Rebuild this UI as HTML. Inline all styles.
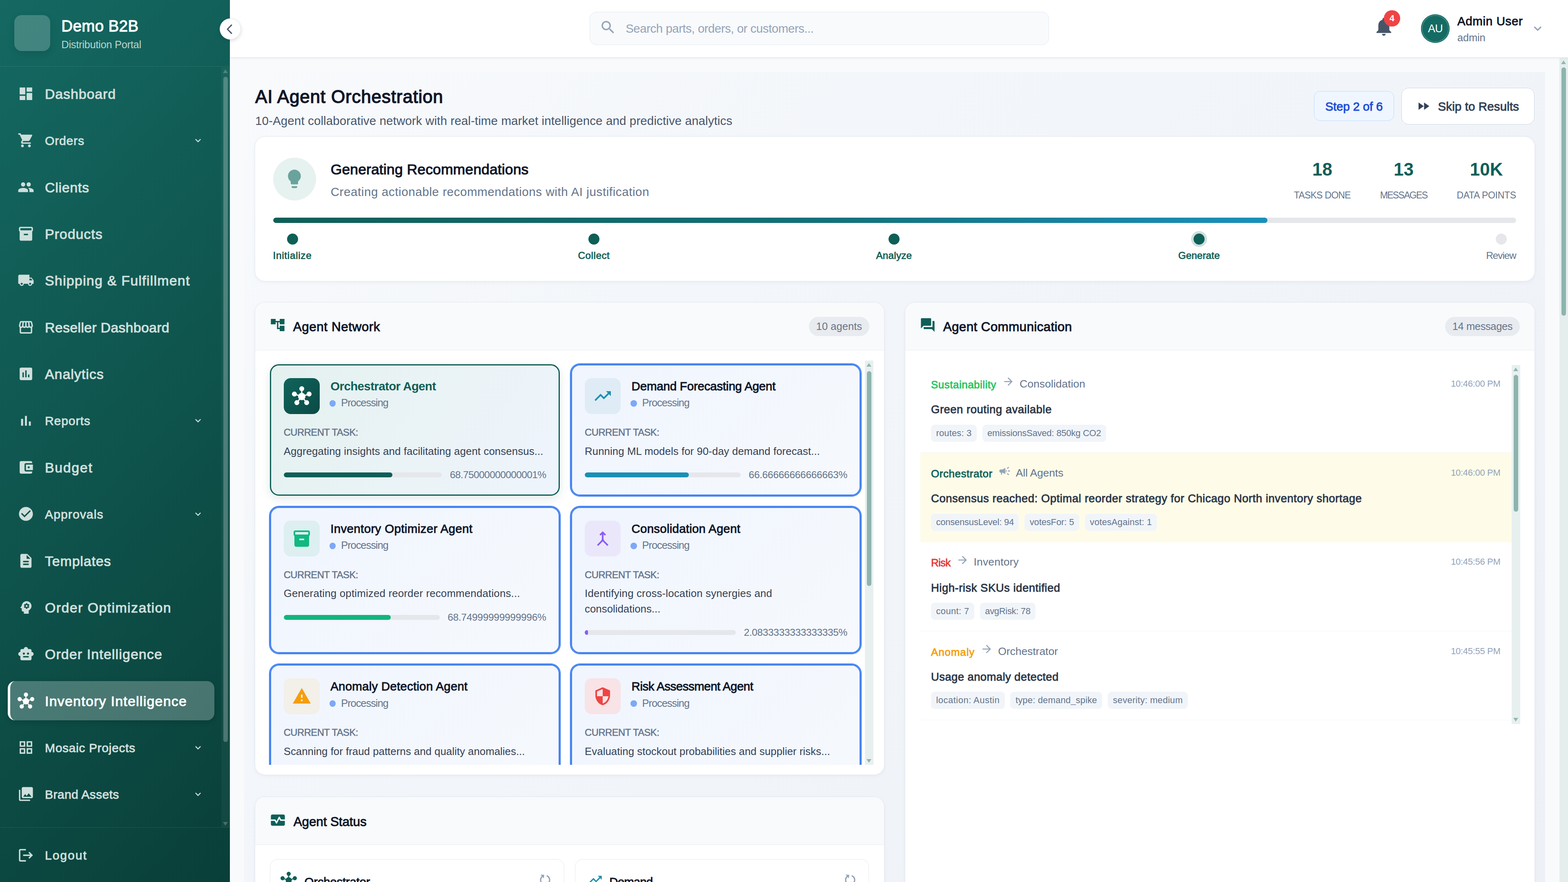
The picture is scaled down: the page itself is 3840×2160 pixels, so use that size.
<!DOCTYPE html>
<html lang="en"><head><meta charset="utf-8"><title>AI Agent Orchestration - Demo B2B Distribution Portal</title>
<meta name="viewport" content="width=3840, initial-scale=1">
<style>
*{box-sizing:border-box;margin:0;padding:0}
html,body{width:3840px;height:2160px;overflow:hidden}
body{position:relative;font-family:"Liberation Sans",sans-serif;background:#f8fafc;color:#0f172a;-webkit-font-smoothing:antialiased}
span{white-space:nowrap}
svg{display:block;flex:none}
i{display:block;font-style:normal}
a{text-decoration:none;cursor:pointer}
button{font:inherit;cursor:pointer}
/* sidebar */
.sb{position:absolute;left:0;top:0;width:562.5px;height:2160px;z-index:3;background:linear-gradient(135deg,#146962 0%,#093f38 100%);color:#fff}
.sbh{position:absolute;left:0;top:0;width:100%;height:162.6px;border-bottom:1.5px solid rgba(255,255,255,.1)}
.logo{position:absolute;left:35px;top:37px;width:88px;height:88px;border-radius:18px;background:rgba(255,255,255,.2);box-shadow:0 6px 18px rgba(0,0,0,.12)}
.b1,.b2{position:absolute;left:150.3px;line-height:1}
.b1{top:45px;font-size:38.5px;font-weight:400;-webkit-text-stroke:.034em;color:#fff}
.b2{top:97.2px;font-size:25.5px;color:rgba(255,255,255,.72)}
.nav{position:absolute;left:0;top:163.5px;width:543.75px;padding:18.25px 0 0 18.75px}
.ni{display:flex;align-items:center;height:95.6px;width:506.25px;margin-bottom:18.78px;border-radius:18px;border-left:6px solid transparent;padding-left:18.65px;color:#cfdfdc}
.nic{margin-right:25.6px}
.nt{font-size:33.8px;font-weight:400;-webkit-text-stroke:.034em;position:relative;top:1px}
.nt.sm{font-size:30px}
.chev{margin-left:auto;margin-right:26px}
.ni.act{background:rgba(255,255,255,.25);border-left-color:#fff;color:#fff;box-shadow:0 4px 14px rgba(0,0,0,.15)}
.sbf{position:absolute;left:0;top:2026px;width:100%;height:134px;border-top:1.5px solid rgba(255,255,255,.1);padding:19.5px 0 0 18.75px}
.sbsc{position:absolute;left:542px;top:165px;width:20.5px;height:1861px;background:rgba(255,255,255,.04)}
.sbsc .up{position:absolute;left:3.5px;top:4.5px;border:6.75px solid transparent;border-top:0;border-bottom:9.5px solid rgba(255,255,255,.22)}
.sbsc .dn{position:absolute;left:3.5px;bottom:4px;border:6.75px solid transparent;border-bottom:0;border-top:9.5px solid rgba(255,255,255,.22)}
.sbsc .th{position:absolute;left:5.3px;top:22.6px;width:10.8px;height:1629px;border-radius:6px;background:rgba(255,255,255,.24)}
.tog{position:absolute;left:537.6px;top:45px;width:52px;height:52px;padding-right:3px;border-radius:50%;background:#fff;border:1.5px solid #e2e8f0;box-shadow:0 3px 10px rgba(15,23,42,.14);z-index:5;display:flex;align-items:center;justify-content:center}
/* topbar */
.tb{position:absolute;left:562.5px;top:0;width:3277.5px;height:140.5px;background:#fff;border-bottom:1.5px solid #e2e8f0;box-shadow:0 2px 5px rgba(15,23,42,.055);z-index:2}
.srch{position:absolute;left:881.2px;top:29.3px;width:1125px;height:81px;border:1.5px solid #e2e8f0;border-radius:17px;background:#f8fafc}
.sic{position:absolute;left:23px;top:15.5px}
.sph{position:absolute;left:87.5px;top:24.5px;line-height:1;font-size:29.5px;color:#94a3b8}
.bell{position:absolute;left:2799.5px;top:38px;width:54px;height:54px}
.bdg{position:absolute;left:27px;top:-12.6px;width:39.7px;height:39.7px;border-radius:50%;background:#ef4444;color:#fff;font-size:22px;font-weight:700;display:flex;align-items:center;justify-content:center}
.av{position:absolute;left:2917.5px;top:35.3px;width:70.2px;height:70.2px;border-radius:50%;background:#146b63;box-shadow:inset 0 0 0 2.2px #146b63,inset 0 0 0 3.2px rgba(255,255,255,.4);display:flex;align-items:center;justify-content:center;color:#fff}
.avt{font-size:27px}
.usr span{position:absolute;left:3006.5px;line-height:1}
.un{top:37.3px;font-size:29.5px;font-weight:400;-webkit-text-stroke:.034em;color:#0f172a}
.ur{top:79.5px;font-size:25.5px;color:#64748b}
.uchev{position:absolute;left:3184.8px;top:51.1px}
/* main */
.mn{position:absolute;left:0;top:0;width:3840px;height:2160px;overflow:hidden;z-index:1}
.ct{position:absolute;left:598px;top:176px;width:3186px;height:2000px;background:linear-gradient(135deg,#f8fafc 0%,#f3f6fa 32%,#edf1f7 100%)}
.ph h1,.ph p{position:absolute;left:625px;line-height:1;font-weight:400}
.ph h1{top:215.2px;font-size:44px;font-weight:400;-webkit-text-stroke:.034em;color:#0f172a}
.ph p{top:280.6px;font-size:29.5px;color:#475569}
.stepchip{position:absolute;left:3218px;top:222.6px;width:195.7px;height:73px;border:1.5px solid #bfdbfe;background:#eff6ff;border-radius:15px;display:flex;align-items:center;justify-content:center;color:#1d4ed8;font-size:29.5px;font-weight:400;-webkit-text-stroke:.034em}
.skip{position:absolute;left:3432px;top:215px;width:325.6px;height:90px;border:1.5px solid #cbd5e1;background:#fff;border-radius:18px;color:#334155}
.skip svg{position:absolute;left:34.5px;top:25.5px}
.skt{position:absolute;left:88.5px;top:29.8px;line-height:1;font-size:29.5px;font-weight:400;-webkit-text-stroke:.034em}
.card{position:absolute;background:#fff;border-radius:24px;box-shadow:0 0 0 1.5px rgba(226,232,240,.55),0 3px 12px rgba(15,23,42,.05)}
/* summary */
.sum{left:625px;top:334.5px;width:3132.5px;height:353.5px}
.sumic{position:absolute;left:43.6px;top:51.1px;width:105px;height:105px;border-radius:50%;background:#e6f2f0;display:flex;align-items:center;justify-content:center}
.sumt span{position:absolute;left:184.7px;line-height:1}
.s1{top:63.2px;font-size:35.5px;font-weight:400;-webkit-text-stroke:.034em;color:#0f172a}
.s2{top:120.5px;font-size:29.5px;color:#64748b}
.stats{position:absolute;right:44.7px;top:0;display:flex;gap:72px}
.stat{position:relative;text-align:center;height:170px}
.stat span{display:block;line-height:1}
.sn{padding-top:58.3px;font-size:44px;font-weight:700;color:#0f5f57}
.sl{margin-top:29.9px;font-size:23px;color:#64748b}
.pbar{position:absolute;left:43.6px;top:198.5px;width:3044.2px;height:12.5px;border-radius:7px;background:#e5e7eb;overflow:hidden}
.pbar i{width:80%;height:100%;border-radius:7px;background:linear-gradient(90deg,#0f5f57 0%,#14707a 55%,#1a90ba 100%)}
.steps{position:absolute;left:43.6px;top:237.5px;width:3044.2px;display:flex;justify-content:space-between}
.st{display:flex;flex-direction:column;align-items:center}
.st i{width:27px;height:27px;border-radius:50%;background:#0f5f57}
.stl{margin-top:15.4px;line-height:1;font-size:24.3px;font-weight:400;-webkit-text-stroke:.034em;color:#0f5f57}
.st.cur i{box-shadow:0 0 0 6px rgba(15,95,87,.2)}
.st.todo i{background:#e5e7eb}
.st.todo .stl{font-weight:400;-webkit-text-stroke:0;color:#64748b}
/* card header */
.chd{position:relative;height:117px;background:#f8fafc;border-bottom:1.5px solid #e8edf2;border-radius:24px 24px 0 0;display:flex;align-items:center;padding-left:34.7px}
.chd>svg{position:relative;top:-3px}
.cht{margin-left:18px;font-size:31.5px;font-weight:400;-webkit-text-stroke:.034em;color:#0f172a;position:relative;top:1px}
.pill{margin-left:auto;margin-right:35.8px;height:47px;padding:0 17.6px;border-radius:24px;background:#e8ebef;color:#64748b;font-size:25.5px;display:flex;align-items:center}
/* network */
.net{left:625px;top:741px;width:1539.5px;height:1156px}
.netsc{position:absolute;left:0;top:117px;width:100%;height:1015.3px;overflow:hidden}
.grid{position:absolute;left:35.7px;top:34.2px;display:grid;grid-template-columns:709.9px 709.9px;gap:26.8px 27.5px}
.ag{border:3px solid #3b82f6;border-radius:22px;padding:31px 30px 29.4px 31px}
.ag.sel{border-color:#0f5f57;background:linear-gradient(120deg,#e4f1ef 0%,#eaf3f6 50%,#eef4fc 100%);box-shadow:0 8px 22px rgba(15,95,87,.13)}
.ag.proc{border-color:#4584f2;box-shadow:0 0 0 2.2px #4584f2;background:linear-gradient(135deg,#f0f5fe 0%,#f6f9fd 100%)}
.agh{display:flex;height:88px}
.aib{width:88px;height:88px;border-radius:17px;display:flex;align-items:center;justify-content:center}
.aib.orch{background:linear-gradient(135deg,#0f645c,#0c4a45)}
.agn{margin-left:26.5px;padding-top:2px}
.an{display:block;line-height:36px;font-size:29.5px;font-weight:400;-webkit-text-stroke:.034em;color:#0f172a}
.sel .an{color:#0f5f57;font-weight:700;-webkit-text-stroke:0}
.aps{display:flex;align-items:center;margin-top:7.8px;height:30px}
.aps i{width:15.5px;height:15.5px;border-radius:50%;background:#7da8f6;margin-left:-2.5px;margin-right:13px;position:relative;top:1px}
.apt{font-size:25.5px;color:#64748b}
.ctl{margin-top:30.2px;line-height:30px}
.ctt{font-size:23.8px;font-weight:400;-webkit-text-stroke:.024em;color:#64748b}
.ctx{margin-top:9.25px;line-height:37.5px;font-size:25.8px;color:#334155}
.apr{margin-top:20.15px;height:37.5px;display:flex;align-items:center}
.apb{flex:1;height:12.4px;border-radius:7px;background:#e5e7eb;overflow:hidden}
.apb i{height:100%;border-radius:7px}
.app{margin-left:19.5px;font-size:24.6px;color:#64748b}
/* scrollbars */
.vsb{position:absolute;background:#e8f0ef}
.vsb .up,.psb .up{position:absolute;left:50%;margin-left:-6.6px;top:6px;border:6.6px solid transparent;border-top:0;border-bottom:9.5px solid #8fb8b1}
.vsb .dn{position:absolute;left:50%;margin-left:-6.6px;bottom:5.5px;border:6.6px solid transparent;border-bottom:0;border-top:9.5px solid #8fb8b1}
.vsb .th,.psb .th{position:absolute;left:50%;margin-left:-5.6px;width:11.2px;border-radius:6px;background:#8db4ae}
.nsb{left:1493.1px;top:142px;width:21px;height:990.3px}
.nsb .th{top:26px;height:526px}
.msb{left:1485.1px;top:153px;width:21px;height:878.8px}
.msb .th{top:24px;height:335px}
.psb{position:absolute;left:3818.8px;top:141.5px;width:21.2px;height:2020px;background:#e6eeed}
.psb .th{top:23px;height:608px}
/* communication */
.com{left:2217px;top:741px;width:1540.5px;height:1500px}
.msgs{position:absolute;left:36.5px;top:150px;width:1448.5px;height:881px;overflow:hidden}
.msg{position:relative;height:218.3px;border-bottom:1.5px solid #f1f5f9}
.msg.hl{background:#fefce8;border-bottom-color:#fefce8}
.mh{position:absolute;left:26.5px;right:27.5px;top:32.5px;height:37.5px;display:flex;align-items:center}
.ms{font-size:26px;font-weight:400;-webkit-text-stroke:.034em}
.mic{margin:0 12px 0 14px;position:relative;top:-7.5px}
.mr{font-size:26.5px;color:#64748b;position:relative;top:-2px}
.mts{margin-left:auto;font-size:22px;color:#94a3b8;position:relative;top:-2.5px}
.mt{position:absolute;left:26.5px;top:98.1px;line-height:1;font-size:27.5px;font-weight:400;-webkit-text-stroke:.034em;color:#2c3748}
.tags{position:absolute;left:26.5px;top:148.5px;display:flex;gap:13.8px}
.tag{height:42px;padding:0 12.5px;border-radius:9px;background:#f1f5f9;font-size:22px;color:#64748b;display:flex;align-items:center}
/* status */
.sts .chd>svg{top:-1px}
.sts .cht{top:2.5px}
.sct{position:relative;top:1.7px}
.sts{left:625px;top:1951.8px;width:1539.5px;height:400px}
.sc{position:absolute;top:152.5px;width:720.7px;height:200px;border:1.5px solid #e2e8f0;border-radius:19px;background:#fff}
.sc:nth-child(1){left:36px}
.sc:nth-child(2){left:782.8px}
.sci{position:absolute;left:29px;top:29.75px}
.sci.h{left:24.9px;top:29.6px}
.scn{position:absolute;left:83.5px;top:39.3px;line-height:1;font-size:29.5px;font-weight:400;-webkit-text-stroke:.034em;color:#0f172a}
.scr{position:absolute;left:654.3px;top:30.3px;transform:rotate(-40deg)}

@media (max-width:3000px){html{zoom:.666667}}
@media (max-width:2200px){html{zoom:.5}}
@media (max-width:1700px){html{zoom:.416667}}
@media (max-width:1500px){html{zoom:.375}}
@media (max-width:1300px){html{zoom:.333333}}

</style></head>
<body>

<aside class="sb">
  <div class="sbh">
    <div class="logo"></div>
    <div class="brand"><span class="b1" style="letter-spacing:0.369px">Demo B2B</span><span class="b2" style="letter-spacing:-0.305px">Distribution Portal</span></div>
  </div>
  <nav class="nav">
<a class="ni"><svg class="nic" viewBox="0 0 24 24" width="41" height="41" fill="currentColor" aria-hidden="true"><path d="M3 13h8V3H3v10zm0 8h8v-6H3v6zm10 0h8V11h-8v10zm0-18v6h8V3h-8z"/></svg><span class="nt" style="letter-spacing:0.959px">Dashboard</span></a>
<a class="ni"><svg class="nic" viewBox="0 0 24 24" width="41" height="41" fill="currentColor" aria-hidden="true"><path d="M7 18c-1.1 0-1.99.9-1.99 2S5.9 22 7 22s2-.9 2-2-.9-2-2-2zM1 2v2h2l3.6 7.59-1.35 2.45c-.16.28-.25.61-.25.96 0 1.1.9 2 2 2h12v-2H7.42c-.14 0-.25-.11-.25-.25l.03-.12.9-1.63h7.45c.75 0 1.41-.41 1.75-1.03l3.58-6.49c.08-.14.12-.31.12-.48 0-.55-.45-1-1-1H5.21l-.94-2H1zm16 16c-1.1 0-1.99.9-1.99 2s.89 2 1.99 2 2-.9 2-2-.9-2-2-2z"/></svg><span class="nt sm" style="letter-spacing:0.843px">Orders</span><svg class="chev" viewBox="0 0 24 24" width="28" height="28" fill="currentColor" aria-hidden="true"><path d="M16.59 8.59L12 13.17 7.41 8.59 6 10l6 6 6-6z"/></svg></a>
<a class="ni"><svg class="nic" viewBox="0 0 24 24" width="41" height="41" fill="currentColor" aria-hidden="true"><path d="M16 11c1.66 0 2.99-1.34 2.99-3S17.66 5 16 5c-1.66 0-3 1.34-3 3s1.34 3 3 3zm-8 0c1.66 0 2.99-1.34 2.99-3S9.66 5 8 5C6.34 5 5 6.34 5 8s1.34 3 3 3zm0 2c-2.33 0-7 1.17-7 3.5V19h14v-2.5c0-2.33-4.67-3.5-7-3.5zm8 0c-.29 0-.62.02-.97.05 1.16.84 1.97 1.97 1.97 3.45V19h6v-2.5c0-2.33-4.67-3.5-7-3.5z"/></svg><span class="nt" style="letter-spacing:0.750px">Clients</span></a>
<a class="ni"><svg class="nic" viewBox="0 0 24 24" width="41" height="41" fill="currentColor" aria-hidden="true"><path d="M20 2H4c-1 0-2 .9-2 2v3.01c0 .72.43 1.34 1 1.69V20c0 1.1 1.1 2 2 2h14c.9 0 2-.9 2-2V8.7c.57-.35 1-.97 1-1.69V4c0-1.1-1-2-2-2zm-5 12H9v-2h6v2zm5-7H4V4h16v3z"/></svg><span class="nt" style="letter-spacing:1.034px">Products</span></a>
<a class="ni"><svg class="nic" viewBox="0 0 24 24" width="41" height="41" fill="currentColor" aria-hidden="true"><path d="M20 8h-3V4H3c-1.1 0-2 .9-2 2v11h2c0 1.66 1.34 3 3 3s3-1.34 3-3h6c0 1.66 1.34 3 3 3s3-1.34 3-3h2v-5l-3-4zM6 18.5c-.83 0-1.5-.67-1.5-1.5s.67-1.5 1.5-1.5 1.5.67 1.5 1.5-.67 1.5-1.5 1.5zm13.5-9l1.96 2.5H17V9.5h2.5zm-1.5 9c-.83 0-1.5-.67-1.5-1.5s.67-1.5 1.5-1.5 1.5.67 1.5 1.5-.67 1.5-1.5 1.5z"/></svg><span class="nt" style="letter-spacing:1.307px">Shipping &amp; Fulfillment</span></a>
<a class="ni"><svg class="nic" viewBox="0 0 24 24" width="41" height="41" fill="currentColor" aria-hidden="true"><path d="M21.9 8.89l-1.05-4.37c-.22-.9-1-1.52-1.91-1.52H5.05c-.9 0-1.69.63-1.9 1.52L2.1 8.89c-.24 1.02-.02 2.06.62 2.88.08.11.19.19.28.29V19c0 1.1.9 2 2 2h14c1.1 0 2-.9 2-2v-6.94c.09-.09.2-.18.28-.28.64-.82.87-1.87.62-2.89zm-2.99-3.9l1.05 4.37c.1.42.01.84-.25 1.17-.14.18-.44.47-.94.47-.61 0-1.14-.49-1.21-1.14L16.98 5l1.93-.01zM13 5h1.96l.54 4.52c.05.39-.07.78-.33 1.07-.22.26-.54.41-.95.41-.67 0-1.22-.59-1.22-1.31V5zM8.49 9.52L9.04 5H11v4.69c0 .72-.55 1.31-1.29 1.31-.34 0-.65-.15-.89-.41-.25-.29-.37-.68-.33-1.07zm-4.45-.16L5.05 5h1.97l-.58 4.86c-.08.65-.6 1.14-1.21 1.14-.49 0-.8-.29-.93-.47-.27-.32-.36-.75-.26-1.17zM5 19v-6.03c.08.01.15.03.23.03.87 0 1.66-.36 2.24-.95.6.6 1.4.95 2.31.95.87 0 1.65-.36 2.23-.93.59.57 1.39.93 2.29.93.84 0 1.64-.35 2.24-.95.58.59 1.37.95 2.24.95.08 0 .15-.02.23-.03V19H5z"/></svg><span class="nt" style="letter-spacing:0.348px">Reseller Dashboard</span></a>
<a class="ni"><svg class="nic" viewBox="0 0 24 24" width="41" height="41" fill="currentColor" aria-hidden="true"><path d="M19 3H5c-1.1 0-2 .9-2 2v14c0 1.1.9 2 2 2h14c1.1 0 2-.9 2-2V5c0-1.1-.9-2-2-2zM9 17H7v-7h2v7zm4 0h-2V7h2v10zm4 0h-2v-4h2v4z"/></svg><span class="nt" style="letter-spacing:1.046px">Analytics</span></a>
<a class="ni"><svg class="nic" viewBox="0 0 24 24" width="41" height="41" fill="currentColor" aria-hidden="true"><path d="M5 9.2h3V19H5zM10.6 5h2.8v14h-2.8zm5.6 8H19v6h-2.8z"/></svg><span class="nt sm" style="letter-spacing:0.942px">Reports</span><svg class="chev" viewBox="0 0 24 24" width="28" height="28" fill="currentColor" aria-hidden="true"><path d="M16.59 8.59L12 13.17 7.41 8.59 6 10l6 6 6-6z"/></svg></a>
<a class="ni"><svg class="nic" viewBox="0 0 24 24" width="41" height="41" fill="currentColor" aria-hidden="true"><path d="M21 18v1c0 1.1-.9 2-2 2H5c-1.11 0-2-.9-2-2V5c0-1.1.89-2 2-2h14c1.1 0 2 .9 2 2v1h-9c-1.11 0-2 .9-2 2v8c0 1.1.89 2 2 2h9zm-9-2h10V8H12v8zm4-2.5c-.83 0-1.5-.67-1.5-1.5s.67-1.5 1.5-1.5 1.5.67 1.5 1.5-.67 1.5-1.5 1.5z"/></svg><span class="nt" style="letter-spacing:1.738px">Budget</span></a>
<a class="ni"><svg class="nic" viewBox="0 0 24 24" width="41" height="41" fill="currentColor" aria-hidden="true"><path d="M12 2C6.48 2 2 6.48 2 12s4.48 10 10 10 10-4.48 10-10S17.52 2 12 2zm-2 15l-5-5 1.41-1.41L10 14.17l7.59-7.59L19 8l-9 9z"/></svg><span class="nt sm" style="letter-spacing:1.137px">Approvals</span><svg class="chev" viewBox="0 0 24 24" width="28" height="28" fill="currentColor" aria-hidden="true"><path d="M16.59 8.59L12 13.17 7.41 8.59 6 10l6 6 6-6z"/></svg></a>
<a class="ni"><svg class="nic" viewBox="0 0 24 24" width="41" height="41" fill="currentColor" aria-hidden="true"><path d="M14 2H6c-1.1 0-1.99.9-1.99 2L4 20c0 1.1.89 2 1.99 2H18c1.1 0 2-.9 2-2V8l-6-6zm2 16H8v-2h8v2zm0-4H8v-2h8v2zm-3-5V3.5L18.5 9H13z"/></svg><span class="nt" style="letter-spacing:0.933px">Templates</span></a>
<a class="ni"><svg class="nic" viewBox="0 0 24 24" width="41" height="41" fill="currentColor" aria-hidden="true"><path d="M13 8.57c-.79 0-1.43.64-1.43 1.43s.64 1.43 1.43 1.43 1.43-.64 1.43-1.43-.64-1.43-1.43-1.43zM13 3C9.25 3 6.2 5.94 6.02 9.64L4.1 12.2c-.25.33-.01.8.4.8H6v3c0 1.1.9 2 2 2h1v3h7v-4.68c2.36-1.12 4-3.53 4-6.32 0-3.87-3.13-7-7-7zm3 7c0 .13-.01.26-.02.39l.83.66c.08.06.1.16.05.25l-.8 1.39c-.05.09-.16.12-.24.09l-.99-.4c-.21.16-.43.29-.67.39L14 13.83c-.01.1-.1.17-.2.17h-1.6c-.1 0-.18-.07-.2-.17l-.15-1.06c-.25-.1-.47-.23-.68-.39l-.99.4c-.09.03-.2 0-.25-.09l-.8-1.39c-.05-.08-.03-.19.05-.25l.84-.66c-.01-.13-.02-.26-.02-.39s.02-.27.04-.39l-.85-.66c-.08-.06-.1-.16-.05-.26l.8-1.38c.05-.09.15-.12.24-.09l1 .4c.2-.15.43-.29.67-.39l.15-1.06c.02-.1.1-.17.2-.17h1.6c.1 0 .18.07.2.17l.15 1.06c.24.1.46.23.67.39l1-.4c.09-.03.2 0 .24.09l.8 1.38c.05.09.03.2-.05.26l-.85.66c.03.12.04.25.04.39z"/></svg><span class="nt" style="letter-spacing:1.470px">Order Optimization</span></a>
<a class="ni"><svg class="nic" viewBox="0 0 24 24" width="41" height="41" fill="currentColor" aria-hidden="true"><path d="M20 9V7c0-1.1-.9-2-2-2h-3c0-1.66-1.34-3-3-3S9 3.34 9 5H6c-1.1 0-2 .9-2 2v2c-1.66 0-3 1.34-3 3s1.34 3 3 3v4c0 1.1.9 2 2 2h12c1.1 0 2-.9 2-2v-4c1.66 0 3-1.34 3-3s-1.34-3-3-3zM7.5 11.5c0-.83.67-1.5 1.5-1.5s1.5.67 1.5 1.5S9.83 13 9 13s-1.5-.67-1.5-1.5zM16 17H8v-2h8v2zm-1-4c-.83 0-1.5-.67-1.5-1.5S14.17 10 15 10s1.5.67 1.5 1.5S15.83 13 15 13z"/></svg><span class="nt" style="letter-spacing:1.173px">Order Intelligence</span></a>
<a class="ni act"><svg class="nic" viewBox="0 0 24 24" width="41" height="41" fill="currentColor" aria-hidden="true"><path d="M8.4 18.2c.38.5.6 1.12.6 1.8 0 1.66-1.34 3-3 3s-3-1.34-3-3 1.34-3 3-3c.44 0 .85.09 1.23.26l1.41-1.77c-.92-1.03-1.29-2.39-1.09-3.69l-2.03-.68C4.98 11.95 4.06 12.5 3 12.5c-1.66 0-3-1.34-3-3s1.34-3 3-3 3 1.34 3 3c0 .07 0 .14-.01.21l2.03.68c.64-1.21 1.82-2.09 3.22-2.32V5.91C9.96 5.57 9 4.4 9 3c0-1.66 1.34-3 3-3s3 1.34 3 3c0 1.4-.96 2.57-2.25 2.91v2.16c1.4.23 2.58 1.11 3.22 2.32l2.03-.68C18 9.64 18 9.57 18 9.5c0-1.66 1.34-3 3-3s3 1.34 3 3-1.34 3-3 3c-1.06 0-1.98-.55-2.52-1.37l-2.03.68c.2 1.29-.16 2.65-1.09 3.69l1.41 1.77c.38-.17.79-.26 1.23-.26 1.66 0 3 1.34 3 3s-1.34 3-3 3-3-1.34-3-3c0-.68.22-1.3.6-1.8l-1.41-1.77c-1.35.75-3.01.76-4.37 0L8.4 18.2z"/></svg><span class="nt" style="letter-spacing:1.306px">Inventory Intelligence</span></a>
<a class="ni"><svg class="nic" viewBox="0 0 24 24" width="41" height="41" fill="currentColor" aria-hidden="true"><path d="M3 3v8h8V3H3zm6 6H5V5h4v4zm-6 4v8h8v-8H3zm6 6H5v-4h4v4zm4-16v8h8V3h-8zm6 6h-4V5h4v4zm-6 4v8h8v-8h-8zm6 6h-4v-4h4v4z"/></svg><span class="nt sm" style="letter-spacing:0.655px">Mosaic Projects</span><svg class="chev" viewBox="0 0 24 24" width="28" height="28" fill="currentColor" aria-hidden="true"><path d="M16.59 8.59L12 13.17 7.41 8.59 6 10l6 6 6-6z"/></svg></a>
<a class="ni"><svg class="nic" viewBox="0 0 24 24" width="41" height="41" fill="currentColor" aria-hidden="true"><path d="M22 16V4c0-1.1-.9-2-2-2H8c-1.1 0-2 .9-2 2v12c0 1.1.9 2 2 2h12c1.1 0 2-.9 2-2zm-11-4l2.03 2.71L16 11l4 5H8l3-4zM2 6v14c0 1.1.9 2 2 2h14v-2H4V6H2z"/></svg><span class="nt sm" style="letter-spacing:0.412px">Brand Assets</span><svg class="chev" viewBox="0 0 24 24" width="28" height="28" fill="currentColor" aria-hidden="true"><path d="M16.59 8.59L12 13.17 7.41 8.59 6 10l6 6 6-6z"/></svg></a>
  </nav>
  <div class="sbsc"><i class="up"></i><i class="th"></i><i class="dn"></i></div>
  <div class="sbf"><a class="ni"><svg class="nic" viewBox="0 0 24 24" width="41" height="41" fill="currentColor" aria-hidden="true"><path d="M17 7l-1.41 1.41L18.17 11H8v2h10.17l-2.58 2.58L17 17l5-5zM4 5h8V3H4c-1.1 0-2 .9-2 2v14c0 1.1.9 2 2 2h8v-2H4V5z"/></svg><span class="nt sm" style="letter-spacing:2.007px">Logout</span></a></div>
</aside>
<button class="tog"><svg viewBox="0 0 24 24" width="33" height="33" fill="none" stroke="#475569" stroke-width="2.2" stroke-linecap="round" stroke-linejoin="round" aria-hidden="true"><path d="M15.2 4.6 8 12l7.2 7.4"/></svg></button>


<header class="tb">
  <div class="srch"><svg class="sic" viewBox="0 0 24 24" width="42" height="42" fill="#94a3b8" aria-hidden="true"><path d="M15.5 14h-.79l-.28-.27C15.41 12.59 16 11.11 16 9.5 16 5.91 13.09 3 9.5 3S3 5.91 3 9.5 5.91 16 9.5 16c1.61 0 3.09-.59 4.23-1.57l.27.28v.79l5 4.99L20.49 19l-4.99-5zm-6 0C7.01 14 5 11.99 5 9.5S7.01 5 9.5 5 14 7.01 14 9.5 11.99 14 9.5 14z"/></svg><span class="sph" style="letter-spacing:-0.496px">Search parts, orders, or customers...</span></div>
  <div class="bell"><svg viewBox="0 0 24 24" width="54" height="54" fill="#475569" aria-hidden="true"><path d="M12 22c1.1 0 2-.9 2-2h-4c0 1.1.89 2 2 2zm6-6v-5c0-3.07-1.64-5.64-4.5-6.32V4c0-.83-.67-1.5-1.5-1.5s-1.5.67-1.5 1.5v.68C7.63 5.36 6 7.92 6 11v5l-2 2v1h16v-1l-2-2z"/></svg><b class="bdg">4</b></div>
  <div class="av"><span class="avt" style="letter-spacing:-0.706px">AU</span></div>
  <div class="usr"><span class="un" style="letter-spacing:0.642px">Admin User</span><span class="ur" style="letter-spacing:-0.222px">admin</span></div>
  <svg class="uchev" viewBox="0 0 24 24" width="37.5" height="37.5" fill="#94a3b8" aria-hidden="true"><path d="M16.59 8.59L12 13.17 7.41 8.59 6 10l6 6 6-6z"/></svg>
</header>

<main class="mn">
<div class="ct"></div>

<div class="ph">
  <h1><span class="h1t" style="letter-spacing:0.816px">AI Agent Orchestration</span></h1>
  <p><span class="h1s" style="letter-spacing:0.121px">10-Agent collaborative network with real-time market intelligence and predictive analytics</span></p>
  <div class="stepchip"><span class="sct" style="letter-spacing:-0.182px">Step 2 of 6</span></div>
  <button class="skip"><svg viewBox="0 0 24 24" width="36" height="36" fill="#334155" aria-hidden="true"><path d="M4 18l8.5-6L4 6v12zm9-12v12l8.5-6L13 6z"/></svg><span class="skt" style="letter-spacing:0.124px">Skip to Results</span></button>
</div>


<section class="card sum">
  <div class="sumic"><svg viewBox="0 0 24 24" width="54" height="54" fill="#6aa39c" aria-hidden="true"><path d="M9 21c0 .5.4 1 1 1h4c.6 0 1-.5 1-1v-1H9v1zm3-19C8.1 2 5 5.1 5 9c0 2.4 1.2 4.5 3 5.7V17c0 .5.4 1 1 1h6c.6 0 1-.5 1-1v-2.3c1.8-1.3 3-3.4 3-5.7 0-3.9-3.1-7-7-7z"/></svg></div>
  <div class="sumt"><span class="s1" style="letter-spacing:0.123px">Generating Recommendations</span><span class="s2" style="letter-spacing:0.603px">Creating actionable recommendations with AI justification</span></div>
  <div class="stats">
    <div class="stat"><span class="sn">18</span><span class="sl" style="letter-spacing:-0.762px">TASKS DONE</span></div>
    <div class="stat"><span class="sn">13</span><span class="sl" style="letter-spacing:-1.674px">MESSAGES</span></div>
    <div class="stat"><span class="sn">10K</span><span class="sl" style="letter-spacing:-0.298px">DATA POINTS</span></div>
  </div>
  <div class="pbar"><i></i></div>
  <div class="steps"><div class="st done"><i></i><span class="stl" style="letter-spacing:0.705px">Initialize</span></div><div class="st done"><i></i><span class="stl" style="letter-spacing:0.491px">Collect</span></div><div class="st done"><i></i><span class="stl" style="letter-spacing:0.213px">Analyze</span></div><div class="st cur"><i></i><span class="stl" style="letter-spacing:0.059px">Generate</span></div><div class="st todo"><i></i><span class="stl" style="letter-spacing:-1.049px">Review</span></div></div>
</section>


<section class="card net">
  <div class="chd"><svg viewBox="0 0 24 24" width="40" height="40" fill="#0f5f57" aria-hidden="true"><path d="M22 11V3h-7v3H9V3H2v8h7V8h2v10h4v3h7v-8h-7v3h-2V8h2v3z"/></svg><span class="cht" style="letter-spacing:0.528px">Agent Network</span><span class="pill"><span style="letter-spacing:0.031px">10 agents</span></span></div>
  <div class="netsc">
    <div class="grid">
<div class="ag sel">
  <div class="agh"><div class="aib orch"><svg viewBox="0 0 24 24" width="48" height="48" fill="#fff" aria-hidden="true"><path d="M8.4 18.2c.38.5.6 1.12.6 1.8 0 1.66-1.34 3-3 3s-3-1.34-3-3 1.34-3 3-3c.44 0 .85.09 1.23.26l1.41-1.77c-.92-1.03-1.29-2.39-1.09-3.69l-2.03-.68C4.98 11.95 4.06 12.5 3 12.5c-1.66 0-3-1.34-3-3s1.34-3 3-3 3 1.34 3 3c0 .07 0 .14-.01.21l2.03.68c.64-1.21 1.82-2.09 3.22-2.32V5.91C9.96 5.57 9 4.4 9 3c0-1.66 1.34-3 3-3s3 1.34 3 3c0 1.4-.96 2.57-2.25 2.91v2.16c1.4.23 2.58 1.11 3.22 2.32l2.03-.68C18 9.64 18 9.57 18 9.5c0-1.66 1.34-3 3-3s3 1.34 3 3-1.34 3-3 3c-1.06 0-1.98-.55-2.52-1.37l-2.03.68c.2 1.29-.16 2.65-1.09 3.69l1.41 1.77c.38-.17.79-.26 1.23-.26 1.66 0 3 1.34 3 3s-1.34 3-3 3-3-1.34-3-3c0-.68.22-1.3.6-1.8l-1.41-1.77c-1.35.75-3.01.76-4.37 0L8.4 18.2z"/></svg></div>
    <div class="agn"><span class="an" style="letter-spacing:-0.617px">Orchestrator Agent</span><div class="aps"><i></i><span class="apt" style="letter-spacing:-1.066px">Processing</span></div></div></div>
  <div class="ctl"><span class="ctt" style="letter-spacing:-0.532px">CURRENT TASK:</span></div>
  <div class="ctx"><span style="letter-spacing:0.113px">Aggregating insights and facilitating agent consensus...</span></div>
  <div class="apr"><div class="apb"><i style="width:68.75%;background:#0f5f57"></i></div><span class="app" style="letter-spacing:-0.653px">68.75000000000001%</span></div>
</div>
<div class="ag proc">
  <div class="agh"><div class="aib" style="background:#dfecf6"><svg viewBox="0 0 24 24" width="48" height="48" fill="#1e8fb0" aria-hidden="true"><path d="M16 6l2.29 2.29-4.88 4.88-4-4L2 16.59 3.41 18l6-6 4 4 6.3-6.29L22 12V6z"/></svg></div>
    <div class="agn"><span class="an" style="letter-spacing:-0.201px">Demand Forecasting Agent</span><div class="aps"><i></i><span class="apt" style="letter-spacing:-1.066px">Processing</span></div></div></div>
  <div class="ctl"><span class="ctt" style="letter-spacing:-0.532px">CURRENT TASK:</span></div>
  <div class="ctx"><span style="letter-spacing:0.069px">Running ML models for 90-day demand forecast...</span></div>
  <div class="apr"><div class="apb"><i style="width:66.67%;background:#1a8fb5"></i></div><span class="app" style="letter-spacing:-0.342px">66.66666666666663%</span></div>
</div>
<div class="ag proc">
  <div class="agh"><div class="aib" style="background:#ddeff1"><svg viewBox="0 0 24 24" width="48" height="48" fill="#10b981" aria-hidden="true"><path d="M20 2H4c-1 0-2 .9-2 2v3.01c0 .72.43 1.34 1 1.69V20c0 1.1 1.1 2 2 2h14c.9 0 2-.9 2-2V8.7c.57-.35 1-.97 1-1.69V4c0-1.1-1-2-2-2zm-5 12H9v-2h6v2zm5-7H4V4h16v3z"/></svg></div>
    <div class="agn"><span class="an" style="letter-spacing:0.353px">Inventory Optimizer Agent</span><div class="aps"><i></i><span class="apt" style="letter-spacing:-1.066px">Processing</span></div></div></div>
  <div class="ctl"><span class="ctt" style="letter-spacing:-0.532px">CURRENT TASK:</span></div>
  <div class="ctx"><span style="letter-spacing:0.207px">Generating optimized reorder recommendations...</span></div>
  <div class="apr"><div class="apb"><i style="width:68.75%;background:#12b57c"></i></div><span class="app" style="letter-spacing:-0.342px">68.74999999999996%</span></div>
</div>
<div class="ag proc">
  <div class="agh"><div class="aib" style="background:#ebe7fb"><svg viewBox="0 0 24 24" width="48" height="48" fill="#8b5cf6" aria-hidden="true"><path d="M6.41 21 5 19.59l4.83-4.83c.75-.75 1.17-1.77 1.17-2.83v-5.1L9.41 8.41 8 7l4-4 4 4-1.41 1.41L13 6.83v5.1c0 1.06.42 2.08 1.17 2.83L19 19.59 17.59 21 12 15.41 6.41 21z"/></svg></div>
    <div class="agn"><span class="an" style="letter-spacing:0.220px">Consolidation Agent</span><div class="aps"><i></i><span class="apt" style="letter-spacing:-1.066px">Processing</span></div></div></div>
  <div class="ctl"><span class="ctt" style="letter-spacing:-0.532px">CURRENT TASK:</span></div>
  <div class="ctx"><span style="letter-spacing:0.182px">Identifying cross-location synergies and</span><br><span style="letter-spacing:0.017px">consolidations...</span></div>
  <div class="apr"><div class="apb"><i style="width:2.08%;background:#8b5cf6"></i></div><span class="app" style="letter-spacing:-0.416px">2.0833333333333335%</span></div>
</div>
<div class="ag proc">
  <div class="agh"><div class="aib" style="background:#f3efe9"><svg viewBox="0 0 24 24" width="48" height="48" fill="#f59e0b" aria-hidden="true"><path d="M1 21h22L12 2 1 21zm12-3h-2v-2h2v2zm0-4h-2v-4h2v4z"/></svg></div>
    <div class="agn"><span class="an" style="letter-spacing:0.210px">Anomaly Detection Agent</span><div class="aps"><i></i><span class="apt" style="letter-spacing:-1.066px">Processing</span></div></div></div>
  <div class="ctl"><span class="ctt" style="letter-spacing:-0.532px">CURRENT TASK:</span></div>
  <div class="ctx"><span style="letter-spacing:0.027px">Scanning for fraud patterns and quality anomalies...</span></div>
  <div class="apr"><div class="apb"><i style="width:50.00%;background:#f59e0b"></i></div><span class="app" style="letter-spacing:0.752px">50%</span></div>
</div>
<div class="ag proc">
  <div class="agh"><div class="aib" style="background:#f8e3e6"><svg viewBox="0 0 24 24" width="48" height="48" fill="#ef4444" aria-hidden="true"><path d="M12 1L3 5v6c0 5.55 3.84 10.74 9 12 5.16-1.26 9-6.45 9-12V5l-9-4zm0 10.99h7c-.53 4.12-3.28 7.79-7 8.94V12H5V6.3l7-3.11v8.8z"/></svg></div>
    <div class="agn"><span class="an" style="letter-spacing:-0.494px">Risk Assessment Agent</span><div class="aps"><i></i><span class="apt" style="letter-spacing:-1.066px">Processing</span></div></div></div>
  <div class="ctl"><span class="ctt" style="letter-spacing:-0.532px">CURRENT TASK:</span></div>
  <div class="ctx"><span style="letter-spacing:0.052px">Evaluating stockout probabilities and supplier risks...</span></div>
  <div class="apr"><div class="apb"><i style="width:50.00%;background:#ef4444"></i></div><span class="app" style="letter-spacing:0.752px">50%</span></div>
</div>
    </div>
  </div>
  <div class="vsb nsb"><i class="up"></i><i class="th"></i><i class="dn"></i></div>
</section>


<section class="card com">
  <div class="chd"><svg viewBox="0 0 24 24" width="40" height="40" fill="#0f5f57" aria-hidden="true"><path d="M21 6h-2v9H6v2c0 .55.45 1 1 1h11l4 4V7c0-.55-.45-1-1-1zm-4 6V3c0-.55-.45-1-1-1H3c-.55 0-1 .45-1 1v14l4-4h10c.55 0 1-.45 1-1z"/></svg><span class="cht" style="letter-spacing:0.307px">Agent Communication</span><span class="pill"><span style="letter-spacing:-0.391px">14 messages</span></span></div>
  <div class="msgs">
<div class="msg">
  <div class="mh"><span class="ms" style="color:#22c55e;letter-spacing:0.491px">Sustainability</span><svg class="mic" viewBox="0 0 24 24" width="31" height="31" fill="#94a3b8" aria-hidden="true"><path d="M12 4l-1.41 1.41L16.17 11H4v2h12.17l-5.58 5.59L12 20l8-8z"/></svg><span class="mr" style="letter-spacing:0.017px">Consolidation</span><span class="mts" style="letter-spacing:-0.309px">10:46:00 PM</span></div>
  <div class="mt"><span style="letter-spacing:0.494px">Green routing available</span></div>
  <div class="tags"><span class="tag"><span style="letter-spacing:0.131px">routes: 3</span></span><span class="tag"><span style="letter-spacing:-0.210px">emissionsSaved: 850kg CO2</span></span></div>
</div>
<div class="msg hl">
  <div class="mh"><span class="ms" style="color:#0f5f57;letter-spacing:0.525px">Orchestrator</span><svg class="mic" viewBox="0 0 24 24" width="31" height="31" fill="#94a3b8" aria-hidden="true"><path d="M18 11v2h4v-2h-4zm-2 6.61c.96.71 2.21 1.65 3.2 2.39.4-.53.8-1.07 1.2-1.6-.99-.74-2.24-1.68-3.2-2.4-.4.54-.8 1.08-1.2 1.61zM20.4 5.6c-.4-.53-.8-1.07-1.2-1.6-.99.74-2.24 1.68-3.2 2.4.4.53.8 1.07 1.2 1.6.96-.72 2.21-1.65 3.2-2.4zM4 9c-1.1 0-2 .9-2 2v2c0 1.1.9 2 2 2h1v4h2v-4h1l5 3V6L8 9H4zm11.5 3c0-1.33-.58-2.53-1.5-3.35v6.69c.92-.81 1.5-2.01 1.5-3.34z"/></svg><span class="mr" style="letter-spacing:-0.163px">All Agents</span><span class="mts" style="letter-spacing:-0.309px">10:46:00 PM</span></div>
  <div class="mt"><span style="letter-spacing:0.524px">Consensus reached: Optimal reorder strategy for Chicago North inventory shortage</span></div>
  <div class="tags"><span class="tag"><span style="letter-spacing:-0.224px">consensusLevel: 94</span></span><span class="tag"><span style="letter-spacing:-0.139px">votesFor: 5</span></span><span class="tag"><span style="letter-spacing:0.087px">votesAgainst: 1</span></span></div>
</div>
<div class="msg">
  <div class="mh"><span class="ms" style="color:#e03a3a;letter-spacing:-0.761px">Risk</span><svg class="mic" viewBox="0 0 24 24" width="31" height="31" fill="#94a3b8" aria-hidden="true"><path d="M12 4l-1.41 1.41L16.17 11H4v2h12.17l-5.58 5.59L12 20l8-8z"/></svg><span class="mr" style="letter-spacing:0.160px">Inventory</span><span class="mts" style="letter-spacing:-0.309px">10:45:56 PM</span></div>
  <div class="mt"><span style="letter-spacing:0.495px">High-risk SKUs identified</span></div>
  <div class="tags"><span class="tag"><span style="letter-spacing:0.340px">count: 7</span></span><span class="tag"><span style="letter-spacing:-0.329px">avgRisk: 78</span></span></div>
</div>
<div class="msg">
  <div class="mh"><span class="ms" style="color:#f59e0b;letter-spacing:0.854px">Anomaly</span><svg class="mic" viewBox="0 0 24 24" width="31" height="31" fill="#94a3b8" aria-hidden="true"><path d="M12 4l-1.41 1.41L16.17 11H4v2h12.17l-5.58 5.59L12 20l8-8z"/></svg><span class="mr" style="letter-spacing:-0.043px">Orchestrator</span><span class="mts" style="letter-spacing:-0.309px">10:45:55 PM</span></div>
  <div class="mt"><span style="letter-spacing:0.386px">Usage anomaly detected</span></div>
  <div class="tags"><span class="tag"><span style="letter-spacing:0.478px">location: Austin</span></span><span class="tag"><span style="letter-spacing:0.162px">type: demand_spike</span></span><span class="tag"><span style="letter-spacing:0.292px">severity: medium</span></span></div>
</div>
  </div>
  <div class="vsb msb"><i class="up"></i><i class="th"></i><i class="dn"></i></div>
</section>


<section class="card sts">
  <div class="chd"><svg viewBox="0 0 24 24" width="41" height="41" fill="#0f5f57" aria-hidden="true"><path d="M15.11 12.45L14 10.24l-3.11 6.21c-.16.34-.51.55-.89.55s-.73-.21-.89-.55L7.38 13H2v5c0 1.1.9 2 2 2h16c1.1 0 2-.9 2-2v-5h-6c-.38 0-.73-.21-.89-.55zM20 4H4c-1.1 0-2 .9-2 2v5h6c.38 0 .73.21.89.55L10 13.76l3.11-6.21c.34-.68 1.45-.68 1.79 0L16.62 11H22V6c0-1.1-.9-2-2-2z"/></svg><span class="cht" style="letter-spacing:-0.130px">Agent Status</span></div>
  <div class="sgrid">
    <div class="sc"><svg class="sci h" viewBox="0 0 24 24" width="40" height="40" fill="#0f5f57" aria-hidden="true"><path d="M8.4 18.2c.38.5.6 1.12.6 1.8 0 1.66-1.34 3-3 3s-3-1.34-3-3 1.34-3 3-3c.44 0 .85.09 1.23.26l1.41-1.77c-.92-1.03-1.29-2.39-1.09-3.69l-2.03-.68C4.98 11.95 4.06 12.5 3 12.5c-1.66 0-3-1.34-3-3s1.34-3 3-3 3 1.34 3 3c0 .07 0 .14-.01.21l2.03.68c.64-1.21 1.82-2.09 3.22-2.32V5.91C9.96 5.57 9 4.4 9 3c0-1.66 1.34-3 3-3s3 1.34 3 3c0 1.4-.96 2.57-2.25 2.91v2.16c1.4.23 2.58 1.11 3.22 2.32l2.03-.68C18 9.64 18 9.57 18 9.5c0-1.66 1.34-3 3-3s3 1.34 3 3-1.34 3-3 3c-1.06 0-1.98-.55-2.52-1.37l-2.03.68c.2 1.29-.16 2.65-1.09 3.69l1.41 1.77c.38-.17.79-.26 1.23-.26 1.66 0 3 1.34 3 3s-1.34 3-3 3-3-1.34-3-3c0-.68.22-1.3.6-1.8l-1.41-1.77c-1.35.75-3.01.76-4.37 0L8.4 18.2z"/></svg><span class="scn" style="letter-spacing:-0.278px">Orchestrator</span><svg class="scr" viewBox="0 0 24 24" width="38" height="38" fill="#94a3b8" aria-hidden="true"><path d="M12 6v3l4-4-4-4v3c-4.42 0-8 3.58-8 8 0 1.57.46 3.03 1.24 4.26L6.7 14.8c-.45-.83-.7-1.79-.7-2.8 0-3.31 2.69-6 6-6zm6.76 1.74L17.3 9.2c.44.84.7 1.79.7 2.8 0 3.31-2.69 6-6 6v-3l-4 4 4 4v-3c4.42 0 8-3.58 8-8 0-1.57-.46-3.03-1.24-4.26z"/></svg></div>
    <div class="sc"><svg class="sci" viewBox="0 0 24 24" width="39" height="39" fill="#1e8fb0" aria-hidden="true"><path d="M16 6l2.29 2.29-4.88 4.88-4-4L2 16.59 3.41 18l6-6 4 4 6.3-6.29L22 12V6z"/></svg><span class="scn" style="letter-spacing:-0.926px">Demand</span><svg class="scr" viewBox="0 0 24 24" width="38" height="38" fill="#94a3b8" aria-hidden="true"><path d="M12 6v3l4-4-4-4v3c-4.42 0-8 3.58-8 8 0 1.57.46 3.03 1.24 4.26L6.7 14.8c-.45-.83-.7-1.79-.7-2.8 0-3.31 2.69-6 6-6zm6.76 1.74L17.3 9.2c.44.84.7 1.79.7 2.8 0 3.31-2.69 6-6 6v-3l-4 4 4 4v-3c4.42 0 8-3.58 8-8 0-1.57-.46-3.03-1.24-4.26z"/></svg></div>
  </div>
</section>

<div class="psb"><i class="up"></i><i class="th"></i></div>
</main>
</body></html>
